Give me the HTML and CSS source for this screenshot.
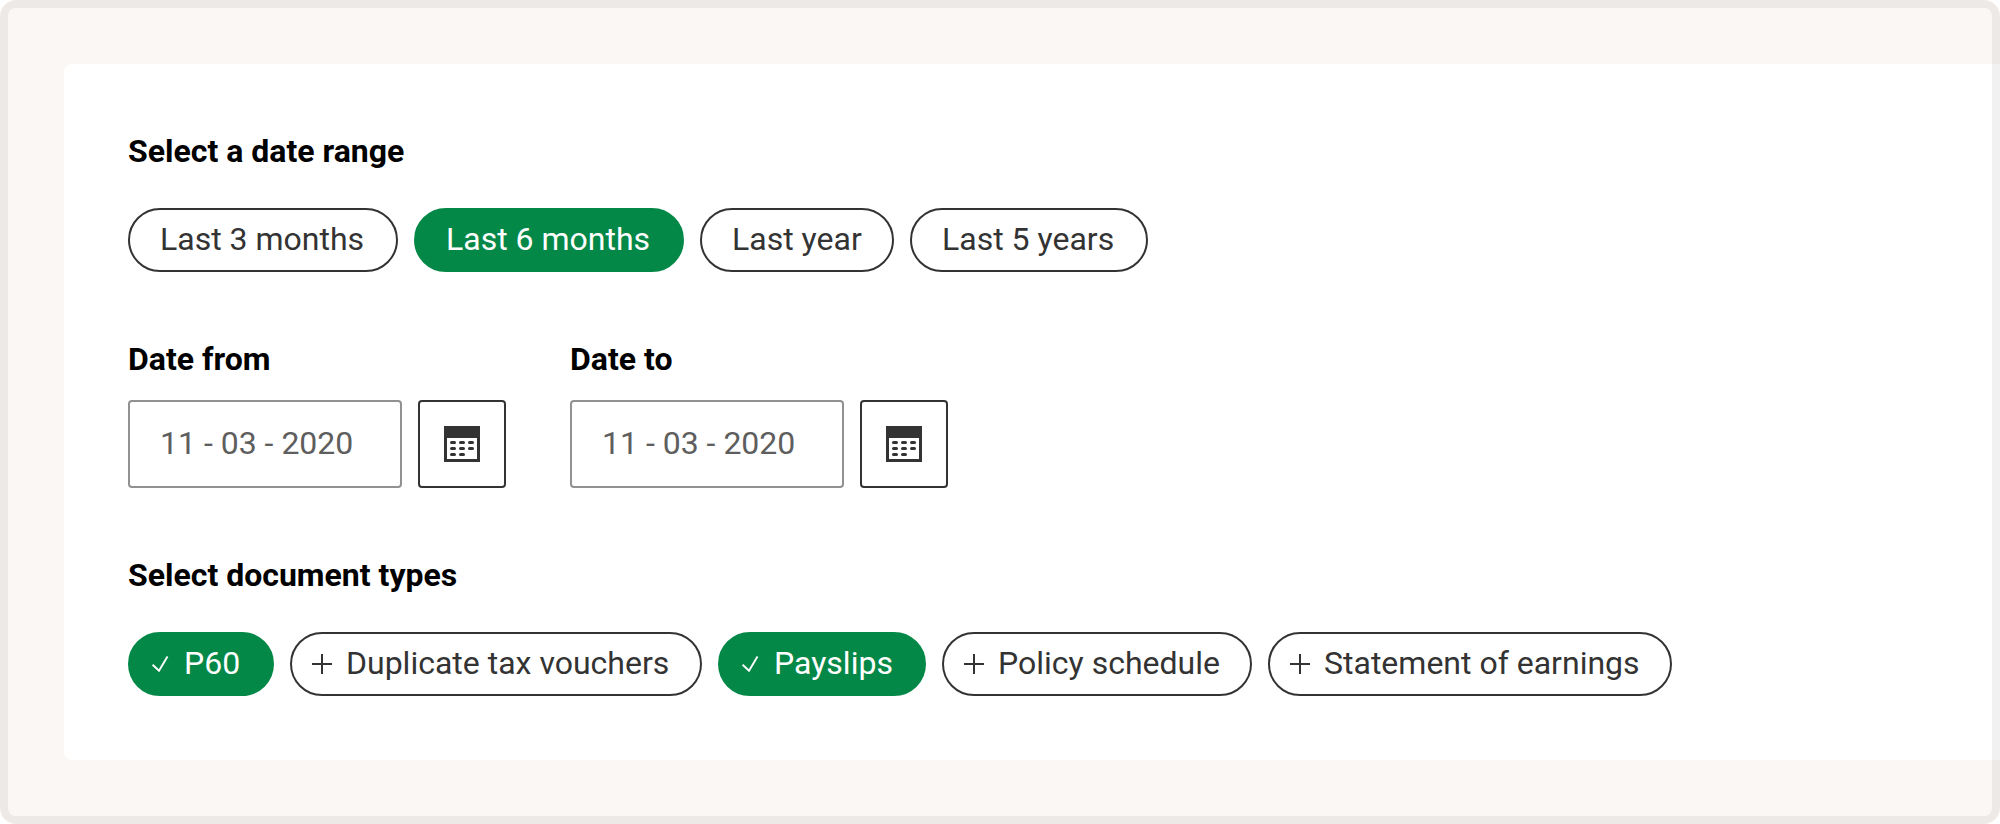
FILE: index.html
```html
<!DOCTYPE html>
<html lang="en">
<head>
<meta charset="utf-8">
<title>Document filters</title>
<link rel="stylesheet" href="styles.css">
</head>
<body>
<svg class="sprite" aria-hidden="true">
  <symbol id="check" viewBox="0 0 20 20"><path d="M2.6 10.700 9 16.800 17.500 2.400" fill="none" stroke="currentColor" stroke-width="1.900"/></symbol>
  <symbol id="plus" viewBox="0 0 20 20"><path d="M0 10H20M10 0V20" fill="none" stroke="currentColor" stroke-width="2"/></symbol>
  <symbol id="calendar" viewBox="0 0 36 36">
    <path d="M0 0H36V36H0ZM3 12V33H33V12Z" fill="currentColor" fill-rule="evenodd"/>
    <path d="M7.5 16.5h3M16.5 16.5h3M25.5 16.5h3M7.5 22.5h3M16.5 22.5h3M25.5 22.5h3M7.5 28.5h3M16.5 28.5h3" stroke="currentColor" stroke-width="3" stroke-linecap="round"/>
  </symbol>
</svg>
<main class="frame">
  <form class="panel">
    <section class="group">
      <h2 class="heading">Select a date range</h2>
      <div class="chips">
        <button type="button" class="chip chip-months">Last 3 months</button>
        <button type="button" class="chip chip-months chip-selected">Last 6 months</button>
        <button type="button" class="chip chip-year">Last year</button>
        <button type="button" class="chip chip-years">Last 5 years</button>
      </div>
    </section>
    <section class="dates">
      <div class="field">
        <h2 class="heading">Date from</h2>
        <div class="field-row">
          <div class="date-input">11 - 03 - 2020</div>
          <button type="button" class="date-button" aria-label="Choose date from"><svg class="calendar"><use href="#calendar"/></svg></button>
        </div>
      </div>
      <div class="field">
        <h2 class="heading">Date to</h2>
        <div class="field-row">
          <div class="date-input">11 - 03 - 2020</div>
          <button type="button" class="date-button" aria-label="Choose date to"><svg class="calendar"><use href="#calendar"/></svg></button>
        </div>
      </div>
    </section>
    <section class="group">
      <h2 class="heading">Select document types</h2>
      <div class="chips">
        <button type="button" class="chip chip-icon chip-p60 chip-selected"><svg class="icon"><use href="#check"/></svg>P60</button>
        <button type="button" class="chip chip-icon chip-vouchers"><svg class="icon"><use href="#plus"/></svg>Duplicate tax vouchers</button>
        <button type="button" class="chip chip-icon chip-payslips chip-selected"><svg class="icon"><use href="#check"/></svg>Payslips</button>
        <button type="button" class="chip chip-icon chip-policy"><svg class="icon"><use href="#plus"/></svg>Policy schedule</button>
        <button type="button" class="chip chip-icon chip-statement"><svg class="icon"><use href="#plus"/></svg>Statement of earnings</button>
      </div>
    </section>
  </form>
</main>
</body>
</html>
```
FILE: styles.css
```css
* { box-sizing: border-box; }
body {
  margin: 0;
  background: #fff;
  color: #333;
  font: 32px/40px Roboto, "Liberation Sans", sans-serif;
}
.sprite { display: none; }
.frame {
  position: relative;
  height: 824px;
  padding: 64px 0 64px 64px;
  border-radius: 16px;
  background: #fbf7f4;
  overflow: hidden;
}
/* Translucent border drawn over the panel where it runs off the edge */
.frame::after {
  content: "";
  position: absolute;
  inset: 0;
  border: 8px solid rgba(0, 0, 0, .055);
  border-radius: 16px;
  pointer-events: none;
}
.panel {
  display: flex;
  flex-direction: column;
  height: 696px;
  padding: 67px 64px 64px;
  border-radius: 8px 0 0 8px;
  background: #fff;
}
.heading {
  margin: 0;
  color: #000;
  font-size: 32px;
  font-weight: 700;
  line-height: 40px;
}
.group { display: flex; flex-direction: column; gap: 37px; }
.chips { display: flex; gap: 16px; }
.chip {
  display: flex;
  align-items: center;
  justify-content: flex-start;
  flex: none;
  height: 64px;
  padding: 0 0 2px 30px;
  border: 2px solid #333;
  border-radius: 32px;
  background: none;
  color: #333;
  font: inherit;
  white-space: nowrap;
}
.chip-icon { padding-left: 20px; }
.chip-selected { border-color: #048848; background: #048848; color: #fff; }
.chip-months { width: 270px; }
.chip-year { width: 194px; }
.chip-years { width: 238px; }
.chip-p60 { width: 146px; }
.chip-vouchers { width: 412px; }
.chip-payslips { width: 208px; }
.chip-policy { width: 310px; }
.chip-statement { width: 404px; }
.icon { flex: none; width: 20px; height: 20px; margin: 2px 14px 0 0; }
.dates { display: flex; gap: 64px; margin: 67px 0; }
.field { display: flex; flex-direction: column; gap: 21px; }
.field-row { display: flex; gap: 16px; }
.date-input {
  width: 274px;
  height: 88px;
  padding: 21px 30px;
  border: 2px solid #919191;
  border-radius: 4px;
  color: #5e5e5e;
}
.date-button {
  display: flex;
  align-items: center;
  justify-content: center;
  width: 88px;
  height: 88px;
  padding: 0;
  border: 2px solid #333;
  border-radius: 4px;
  background: none;
  color: #333;
}
.calendar { width: 36px; height: 36px; }
```
